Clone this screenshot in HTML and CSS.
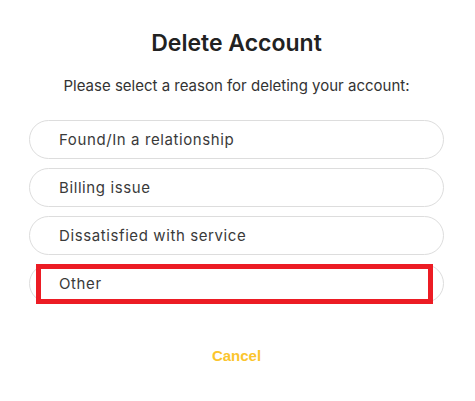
FILE: index.html
```html
<!DOCTYPE html>
<html>
<head>
  <title>Delete Account</title>
  <link rel="stylesheet" href="styles.css">
</head>
<body>
  <div class="dialog">
    <h1>Delete Account</h1>
    <p class="subtitle">Please select a reason for deleting your account:</p>

    <ul class="reasons">
      <li class="reason">Found/In a relationship</li>
      <li class="reason">Billing issue</li>
      <li class="reason">Dissatisfied with service</li>
      <li class="reason highlight">Other</li>
    </ul>

    <button class="cancel">Cancel</button>
  </div>
</body>
</html>
```

FILE: styles.css
```css
body {
  margin: 0;
  background-color: #fff;
  font-family: Inter, "Open Sans", sans-serif;
  color: #333;
}

.dialog {
  width: 415px;
  margin-left: 29px;
  padding-top: 29px;
  text-align: center;
}

h1 {
  margin: 0;
  font-size: 23px;
  font-weight: 600;
  color: #222;
  line-height: 28px;
}

.subtitle {
  margin: 19px 0 0;
  font-size: 15px;
  line-height: 20px;
  color: #333;
}

.reasons {
  list-style: none;
  margin: 24px 0 0;
  padding: 0;
  display: flex;
  flex-direction: column;
  gap: 9px;
}

.reason {
  position: relative;
  height: 39px;
  box-sizing: border-box;
  border: 1px solid #ddd;
  border-radius: 20px;
  padding-left: 29px;
  text-align: left;
  font-size: 15px;
  line-height: 37px;
  letter-spacing: 0.6px;
  color: #3a3a3a;
}

.highlight::after {
  content: "";
  position: absolute;
  left: 6px;
  right: 10px;
  top: -1px;
  bottom: -2px;
  border: 5px solid #ec1c24;
}

.cancel {
  margin-top: 43px;
  background: none;
  border: none;
  font-family: "Liberation Sans", Arial, sans-serif;
  font-weight: bold;
  font-size: 15px;
  color: #fbc52d;
  cursor: pointer;
}
```
